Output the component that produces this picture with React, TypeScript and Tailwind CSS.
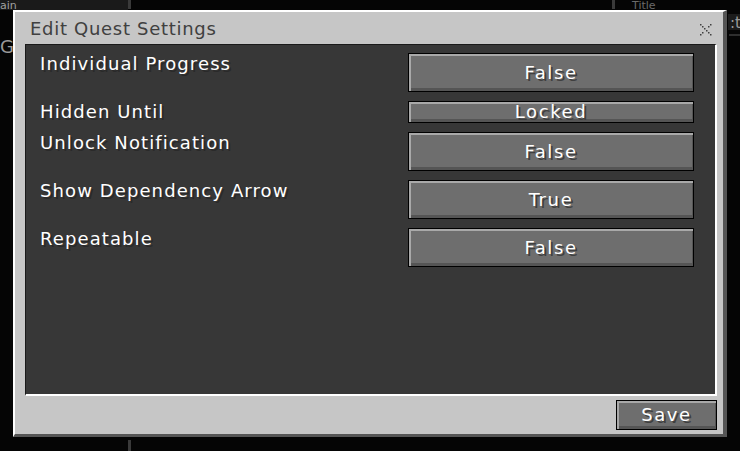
import React from "react";

const font = "font-['DejaVu_Sans',sans-serif]";

function McButton({ label, h }: { label: string; h: string }) {
  return (
    <div className={`w-[286px] ${h} border border-black bg-[#6e6e6e] shadow-[inset_2px_2px_0_#a9a9a9,inset_-1px_-3px_0_#555555] flex items-center justify-center`}>
      <span className={`${font} text-[18px] leading-[18px] tracking-[1.6px] text-white [text-shadow:2px_2px_0_#3f3f3f]`}>{label}</span>
    </div>
  );
}

function Row({ label, value, small }: { label: string; value: string; small?: boolean }) {
  return (
    <div className="flex items-start">
      <div className={`flex-1 pt-[2px] ${font} text-[18px] leading-[18px] tracking-[1.1px] text-white [text-shadow:2px_2px_0_#2a2a2a]`}>
        {label}
      </div>
      <McButton label={value} h={small ? "h-[22px]" : "h-[39px]"} />
    </div>
  );
}

export default function App() {
  return (
    <div className="relative w-[740px] h-[451px] bg-[#050505] overflow-hidden">
      {/* background window fragments */}
      <div className="absolute left-0 top-0 w-[128px] h-[10px] bg-[#1a1a1a]" />
      <div className={`absolute left-0 top-0 ${font} text-[11px] leading-[11px] text-[#a0a0a0]`}>ain</div>
      <div className={`absolute left-0 top-[33px] ${font} text-[18px] text-[#9a9a9a]`}>G</div>
      <div className="absolute left-[128px] top-0 w-[3px] h-[9px] bg-[#3a3a3a]" />
      <div className="absolute left-[128px] top-[440px] w-[3px] h-[11px] bg-[#3a3a3a]" />
      <div className="absolute left-[612px] top-0 w-[3px] h-[9px] bg-[#3a3a3a]" />
      <div className={`absolute left-[632px] top-0 ${font} text-[11px] leading-[11px] text-[#6a6a6a]`}>Title</div>
      <div className="absolute left-[728px] top-[14px] w-[12px] h-[16px] bg-[#1c1c1c]" />
      <div className={`absolute left-[730px] top-[12px] ${font} text-[15px] text-[#9a9a9a]`}>:t</div>
      <div className="absolute left-[729px] top-[34px] w-[11px] h-[2px] bg-[#2e2e2e]" />

      <div className="relative z-10 pt-[10px] pl-[13px] w-fit">
        <div className="w-[714px] h-[427px] bg-[#c6c6c6] border-l-2 border-t-2 border-white border-r-4 border-b-[3px] border-r-[#555555] border-b-[#555555] flex flex-col">
          {/* title bar */}
          <div className="h-[32px] flex items-start justify-between pl-[15px] pr-[11px]">
            <div className={`${font} text-[18px] leading-[18px] tracking-[0.7px] text-[#404040] mt-[8px]`}>Edit Quest Settings</div>
            <svg width="12" height="12" viewBox="0 0 12 12" className="mt-[12px]">
              {[
                [0, 0], [2, 2], [4, 4], [6, 6], [8, 8], [10, 10],
                [10, 0], [8, 2], [2, 8], [0, 10],
              ].map(([x, y], i) => (
                <rect key={i} x={x} y={y} width="1.5" height="1.5" fill="#404040" />
              ))}
            </svg>
          </div>
          {/* inner dark area */}
          <div className="ml-[10px] w-[692px] h-[352px] bg-[#373737] border-t border-l border-[#1a1a1a] border-r-2 border-b-2 border-r-white border-b-white pt-[8px] pl-[14px] pr-[21px] flex flex-col gap-[9px]">
            <Row label="Individual Progress" value="False" />
            <Row label="Hidden Until" value="Locked" small />
            <Row label="Unlock Notification" value="False" />
            <Row label="Show Dependency Arrow" value="True" />
            <Row label="Repeatable" value="False" />
          </div>
          {/* bottom bar */}
          <div className="flex-1 flex justify-end items-start pt-[4px] pr-[6px]">
            <div className="w-[101px] h-[30px] border border-black bg-[#6e6e6e] shadow-[inset_2px_2px_0_#a9a9a9,inset_-1px_-3px_0_#555555] flex items-center justify-center">
              <span className={`${font} text-[18px] leading-[18px] tracking-[1.6px] text-white [text-shadow:2px_2px_0_#3f3f3f]`}>Save</span>
            </div>
          </div>
        </div>
      </div>
    </div>
  );
}
